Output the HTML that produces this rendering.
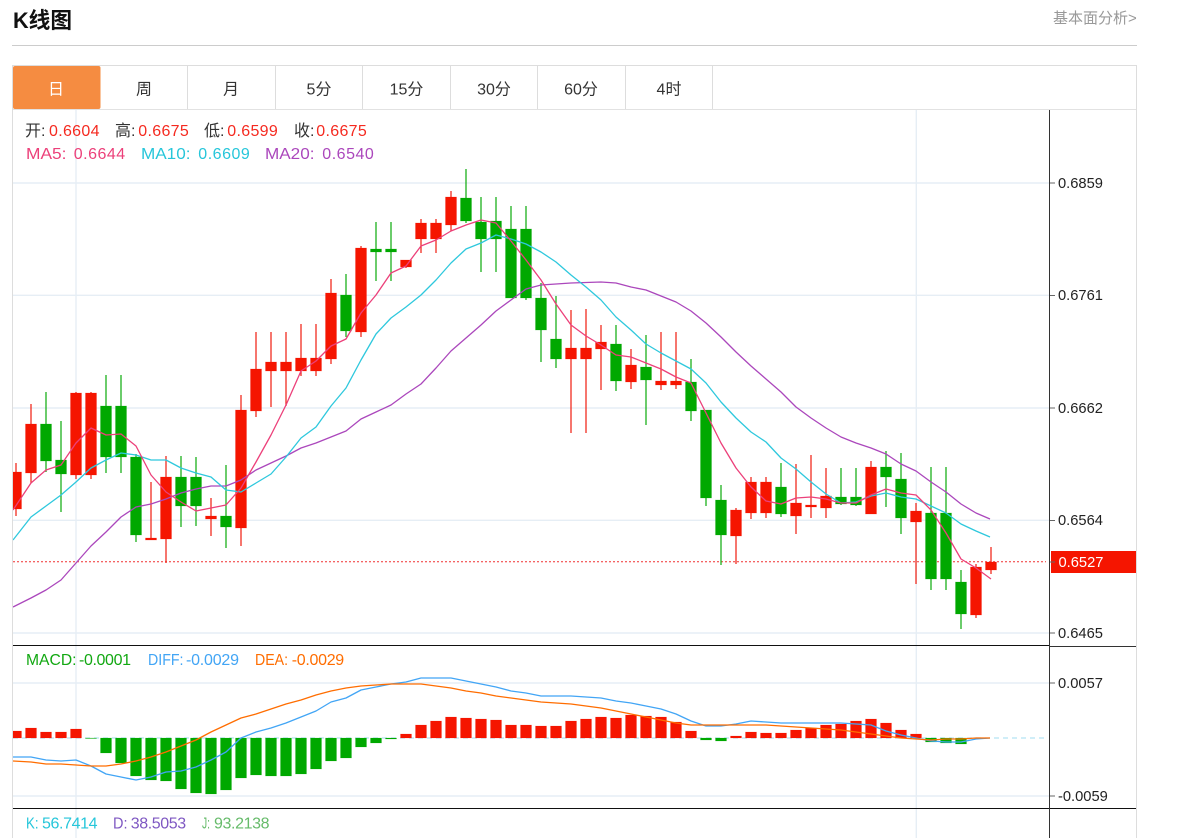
<!DOCTYPE html>
<html lang="zh">
<head>
<meta charset="utf-8">
<title>K线图</title>
<style>
html,body{margin:0;padding:0;background:#fff;width:1186px;height:838px;overflow:hidden}
svg{display:block;position:absolute;left:0;top:0}
text{font-family:"Liberation Sans","Noto Sans CJK SC",sans-serif;white-space:pre}
.t{font-size:16px;fill:#333;text-anchor:middle}
.i{font-size:16px}
.a{font-size:14.7px;fill:#222}
</style>
</head>
<body>
<svg width="1186" height="838" viewBox="0 0 1186 838" xmlns="http://www.w3.org/2000/svg">
<defs><clipPath id="c"><rect x="13" y="110" width="1036" height="728"/></clipPath></defs>

<text x="13" y="28" font-size="22" font-weight="700" fill="#111" textLength="59" lengthAdjust="spacingAndGlyphs">K线图</text>
<text x="1053" y="23" font-size="15" fill="#999">基本面分析&gt;</text>
<rect x="12" y="45" width="1125" height="1" fill="#ccc"/>

<!-- frame -->
<rect x="12" y="65" width="1125" height="1" fill="#ddd"/>
<rect x="12" y="65" width="1" height="773" fill="#ddd"/>
<rect x="1136" y="65" width="1" height="773" fill="#ddd"/>
<rect x="13" y="109" width="1123" height="1" fill="#e2e2e2"/>

<!-- tabs -->
<rect x="13" y="66" width="87.5" height="43" rx="2" fill="#f58c41"/>
<path d="M187.5 66V109M275.5 66V109M362.5 66V109M450.5 66V109M537.5 66V109M625.5 66V109M712.5 66V109" stroke="#ddd" stroke-width="1"/>
<text class="t" x="56" y="94.700" style="fill:#fff">日</text>
<text class="t" x="144" y="94.700">周</text>
<text class="t" x="231" y="94.700">月</text>
<text class="t" x="319" y="94.700">5分</text>
<text class="t" x="406.500" y="94.700">15分</text>
<text class="t" x="494" y="94.700">30分</text>
<text class="t" x="581" y="94.700">60分</text>
<text class="t" x="669" y="94.700">4时</text>

<!-- grid -->
<g stroke="#e6eef5" stroke-width="1.4" fill="none">
<path d="M13 183H1049M13 295.300H1049M13 408H1049M13 520.300H1049M13 633H1049M13 683H1049M13 796H1049"/>
<path d="M76 110V838M916.300 110V838"/>
</g>

<!-- zero line + last price -->
<path d="M13 738H1045" stroke="#b5e3f4" stroke-width="1.2" stroke-dasharray="5 4"/>
<path d="M13 561.800H1046" stroke="#f03030" stroke-width="1" stroke-dasharray="2 2"/>

<g clip-path="url(#c)">
<!-- candle wicks -->
<path fill="none" stroke="#f02c20" stroke-width="1.300" d="M16 463V516M31 404V483M76 392V479M91 392V479M151 482V540M166 456V563M211 498V536M241 395V546M256 332V417M271 332V407M286 332V406M301 324V376M316 324V376M331 279V364M361 246V337M406 260V268M421 219V253M436 219V253M451 191V231M571 310V433M586 309V433M601 325V390M631 349V389M661 332V390M676 332V389M736 508V564M751 477V519M766 477V518M796 464V534M811 455V518M826 468V518M871 461V514M916 503V584M976 564V618M991 547V574"/>
<path fill="none" stroke="#1cb01c" stroke-width="1.300" d="M46 392V472M61 421V512M106 375V473M121 375V473M136 454V542M181 456V527M196 457V526M226 465V548M346 274V337M376 222V281M391 222V281M466 169V223M481 197V272M496 197V272M511 206V298M526 206V300M541 283V362M556 296V368M616 325V391M646 335V425M691 359V421M706 410V506M721 485V565M781 463V517M841 468V505M856 468V506M886 451V507M901 453V534M931 467V590M946 467V590M961 570V629"/>
<!-- candle bodies -->
<path fill="#f51500" stroke="#f51500" stroke-opacity=".4" stroke-width=".6" d="M10.500 472h11V509h-11zM25.500 424h11V473h-11zM70.500 393h11V475h-11zM85.500 393h11V475h-11zM145.500 538h11V540h-11zM160.500 477h11V539h-11zM205.500 516h11V519h-11zM235.500 410h11V528h-11zM250.500 369h11V411h-11zM265.500 362h11V371h-11zM280.500 362h11V371h-11zM295.500 358h11V371h-11zM310.500 358h11V371h-11zM325.500 293h11V359h-11zM355.500 248h11V332h-11zM400.500 260h11V267h-11zM415.500 223h11V239h-11zM430.500 223h11V239h-11zM445.500 197h11V225h-11zM565.500 348h11V359h-11zM580.500 348h11V359h-11zM595.500 342h11V349h-11zM625.500 365h11V382h-11zM655.500 381h11V385h-11zM670.500 381h11V385h-11zM730.500 510h11V536h-11zM745.500 482h11V513h-11zM760.500 482h11V513h-11zM790.500 503h11V516h-11zM805.500 505h11V507h-11zM820.500 496h11V508h-11zM865.500 467h11V514h-11zM910.500 511h11V522h-11zM970.500 567h11V615h-11zM985.500 562h11V570h-11z"/>
<path fill="#00a800" stroke="#00a800" stroke-opacity=".4" stroke-width=".6" d="M40.500 424h11V461h-11zM55.500 460h11V474h-11zM100.500 406h11V457h-11zM115.500 406h11V457h-11zM130.500 457h11V535h-11zM175.500 477h11V506h-11zM190.500 477h11V506h-11zM220.500 516h11V527h-11zM340.500 295h11V331h-11zM370.500 249h11V252h-11zM385.500 249h11V252h-11zM460.500 198h11V221h-11zM475.500 222h11V239h-11zM490.500 221h11V239h-11zM505.500 229h11V298h-11zM520.500 229h11V298h-11zM535.500 298h11V330h-11zM550.500 339h11V359h-11zM610.500 344h11V381h-11zM640.500 367h11V380h-11zM685.500 382h11V411h-11zM700.500 410h11V498h-11zM715.500 500h11V535h-11zM775.500 487h11V514h-11zM835.500 497h11V504h-11zM850.500 497h11V505h-11zM880.500 467h11V477h-11zM895.500 479h11V518h-11zM925.500 513h11V579h-11zM940.500 513h11V579h-11zM955.500 582h11V614h-11z"/>

<!-- MA lines -->
<g fill="none" stroke-width="1.300" stroke-linejoin="round">
<polyline stroke="#ab47bc" points="13,607 31,598 46,590 61,580 76,563 91,546 106,532 121,517 136,507 151,504 166,499 181,493 196,489 211,486 226,486 241,480 256,470 271,463 286,456 301,448 316,443 331,437 346,431 361,419 376,412 391,405 406,394 421,384 436,368 451,351 466,338 481,325 496,311 511,300 526,289 541,285 571,283 601,282 616,283 631,287 646,290 661,296 676,302 691,311 706,323 721,337 736,352 751,366 766,379 781,392 796,407 811,418 826,428 841,437 856,443 871,448 886,454 901,464 916,471 931,482 946,492 961,504 976,513 990,519"/>
<polyline stroke="#2ec8dd" points="13,540 31,517 46,506 61,495 76,482 91,468 106,460 121,453 136,455 151,460 166,460 181,468 196,473 211,477 226,490 241,492 256,483 271,474 286,457 301,438 316,427 331,406 346,388 361,360 376,334 391,318 406,307 421,295 436,280 451,263 466,249 481,243 496,235 511,239 526,244 541,252 556,262 571,275 586,287 601,300 616,317 631,330 646,344 661,353 676,361 691,369 706,383 721,402 736,418 751,432 766,442 781,458 796,469 811,482 826,494 841,503 856,502 871,496 886,493 901,497 916,499 931,506 946,513 961,524 976,531 990,537"/>
<polyline stroke="#ec407a" points="13,510 31,483 46,470 61,465 76,443 91,428 106,435 121,434 136,446 151,475 166,492 181,502 196,511 211,508 226,505 241,488 256,462 271,435 286,405 301,371 316,361 331,346 346,339 361,313 376,295 391,273 406,266 421,246 436,240 451,231 466,225 481,220 496,223 511,241 526,260 541,280 556,304 571,325 586,336 601,345 616,355 631,357 646,363 661,369 676,377 691,383 706,413 721,443 736,468 751,487 766,501 781,504 796,498 811,497 826,499 841,503 856,503 871,495 886,489 901,493 916,495 931,510 946,533 961,559 976,568 991,579"/>
</g>

<!-- MACD bars -->
<path fill="#f51500" stroke="#f51500" stroke-opacity=".3" stroke-width=".6" d="M10.500 731h11V738h-11zM25.500 728h11V738h-11zM40.500 732h11V738h-11zM55.500 732h11V738h-11zM70.500 729h11V738h-11zM400.500 734h11V738h-11zM415.500 725h11V738h-11zM430.500 721h11V738h-11zM445.500 717h11V738h-11zM460.500 718h11V738h-11zM475.500 719h11V738h-11zM490.500 720h11V738h-11zM505.500 725h11V738h-11zM520.500 725h11V738h-11zM535.500 726h11V738h-11zM550.500 726h11V738h-11zM565.500 721h11V738h-11zM580.500 719h11V738h-11zM595.500 717h11V738h-11zM610.500 718h11V738h-11zM625.500 715h11V738h-11zM640.500 716h11V738h-11zM655.500 717h11V738h-11zM670.500 722h11V738h-11zM685.500 731h11V738h-11zM730.500 736h11V738h-11zM745.500 732h11V738h-11zM760.500 733h11V738h-11zM775.500 733h11V738h-11zM790.500 730h11V738h-11zM805.500 728h11V738h-11zM820.500 725h11V738h-11zM835.500 724h11V738h-11zM850.500 721h11V738h-11zM865.500 719h11V738h-11zM880.500 723h11V738h-11zM895.500 730h11V738h-11zM910.500 734h11V738h-11z"/>
<path fill="#00a800" stroke="#00a800" stroke-opacity=".3" stroke-width=".6" d="M85.500 738h11V738.500h-11zM100.500 738h11V753h-11zM115.500 738h11V763h-11zM130.500 738h11V776h-11zM145.500 738h11V780h-11zM160.500 738h11V781h-11zM175.500 738h11V789h-11zM190.500 738h11V793h-11zM205.500 738h11V794h-11zM220.500 738h11V790h-11zM235.500 738h11V778h-11zM250.500 738h11V775h-11zM265.500 738h11V776h-11zM280.500 738h11V776h-11zM295.500 738h11V774h-11zM310.500 738h11V769h-11zM325.500 738h11V761h-11zM340.500 738h11V758h-11zM355.500 738h11V747h-11zM370.500 738h11V743h-11zM385.500 738h11V739h-11zM700.500 738h11V740h-11zM715.500 738h11V741h-11zM925.500 738h11V742h-11zM940.500 738h11V743h-11zM955.500 738h11V744h-11z"/>

<!-- MACD lines -->
<g fill="none" stroke-width="1.300" stroke-linejoin="round">
<polyline stroke="#42a5f5" points="13,757 31,757 46,760 61,761 76,760 91,766 106,774 121,777 136,780 151,777 166,772 181,771 196,767 211,760 226,752 241,738 256,732 271,728 286,723 301,717 316,711 331,702 346,698 361,690 376,687 391,684 406,682 421,678 436,678 451,678 466,681 481,684 496,687 511,691 526,693 541,696 556,696 571,696 586,697 601,698 616,701 631,703 646,706 661,709 676,714 691,721 706,726 721,726 736,724 751,721 766,722 781,723 796,723 811,723 826,723 841,723 856,724 871,725 886,731 901,735 916,738 931,741 946,742 961,742 976,739 990,738"/>
<polyline stroke="#ff6d00" points="13,761 31,762 46,764 61,764 76,765 91,766 106,766 121,764 136,761 151,757 166,752 181,746 196,740 211,732 226,725 241,718 256,714 271,709 286,704 301,700 316,695 331,691 346,688 361,686 376,685 391,684 406,684 421,684 436,686 451,688 466,691 481,693 496,696 511,698 526,700 541,702 556,703 571,704 586,706 601,708 616,711 631,714 646,717 661,720 676,723 691,725 706,725 721,725 736,725 751,725 766,725 781,726 796,727 811,728 826,729 841,730 856,732 871,734 886,736 901,738 916,739 931,740 946,739 961,739 976,738 990,738"/>
</g>
</g>

<!-- pane separators and axis -->
<rect x="13" y="645" width="1036" height="1" fill="#111"/>
<rect x="1049" y="646" width="87" height="1" fill="#333"/>
<rect x="13" y="808" width="1123" height="1" fill="#111"/>
<rect x="1049" y="110" width="1" height="728" fill="#333"/>
<path d="M1050 183H1055M1050 295.500H1055M1050 408H1055M1050 520.500H1055M1050 633H1055M1050 683H1055M1050 796H1055" stroke="#666" stroke-width="1"/>

<rect x="1051" y="551" width="85" height="22" fill="#f51500"/>
<path d="M1050 562H1055" stroke="#666" stroke-width="1"/>

<text class="a" x="1058" y="188">0.6859</text>
<text class="a" x="1058" y="300">0.6761</text>
<text class="a" x="1058" y="413">0.6662</text>
<text class="a" x="1058" y="525">0.6564</text>
<text class="a" x="1058.500" y="567" style="fill:#fff">0.6527</text>
<text class="a" x="1058" y="638">0.6465</text>
<text class="a" x="1058" y="688">0.0057</text>
<text class="a" x="1058" y="801">-0.0059</text>

<!-- info rows -->
<text class="i" x="25" y="136" fill="#333">开:</text><text class="i" x="49" y="136" fill="#f52a20" textLength="50.500">0.6604</text>
<text class="i" x="115" y="136" fill="#333">高:</text><text class="i" x="138.300" y="136" fill="#f52a20" textLength="50.500">0.6675</text>
<text class="i" x="204" y="136" fill="#333">低:</text><text class="i" x="227.300" y="136" fill="#f52a20" textLength="50.500">0.6599</text>
<text class="i" x="294" y="136" fill="#333">收:</text><text class="i" x="316.300" y="136" fill="#f52a20" textLength="50.500">0.6675</text>

<text class="i" x="26" y="159" fill="#ec407a" textLength="40.500" lengthAdjust="spacingAndGlyphs">MA5:</text><text class="i" x="73.700" y="159" fill="#ec407a" textLength="51.500">0.6644</text>
<text class="i" x="141" y="159" fill="#26c6da" textLength="49.500" lengthAdjust="spacingAndGlyphs">MA10:</text><text class="i" x="198.300" y="159" fill="#26c6da" textLength="51.500">0.6609</text>
<text class="i" x="265" y="159" fill="#ab47bc" textLength="49.500" lengthAdjust="spacingAndGlyphs">MA20:</text><text class="i" x="322.300" y="159" fill="#ab47bc" textLength="51.500">0.6540</text>

<text class="i" x="26" y="665" fill="#12a812" textLength="50.500" lengthAdjust="spacingAndGlyphs">MACD:</text><text class="i" x="79" y="665" fill="#12a812" textLength="52">-0.0001</text>
<text class="i" x="148" y="665" fill="#42a5f5" textLength="35.500" lengthAdjust="spacingAndGlyphs">DIFF:</text><text class="i" x="186" y="665" fill="#42a5f5" textLength="53">-0.0029</text>
<text class="i" x="255" y="665" fill="#ff6d00" textLength="33" lengthAdjust="spacingAndGlyphs">DEA:</text><text class="i" x="291.700" y="665" fill="#ff6d00" textLength="52.500">-0.0029</text>

<text class="i" x="26" y="828.500" fill="#26c6da" textLength="12.500" lengthAdjust="spacingAndGlyphs">K:</text><text class="i" x="42" y="828.500" fill="#26c6da" textLength="55.500">56.7414</text>
<text class="i" x="113" y="828.500" fill="#7e57c2" textLength="14.500" lengthAdjust="spacingAndGlyphs">D:</text><text class="i" x="130.700" y="828.500" fill="#7e57c2" textLength="55.500">38.5053</text>
<text class="i" x="202" y="828.500" fill="#66bb6a" textLength="8" lengthAdjust="spacingAndGlyphs">J:</text><text class="i" x="214" y="828.500" fill="#66bb6a" textLength="55.500">93.2138</text>
</svg>
</body>
</html>
